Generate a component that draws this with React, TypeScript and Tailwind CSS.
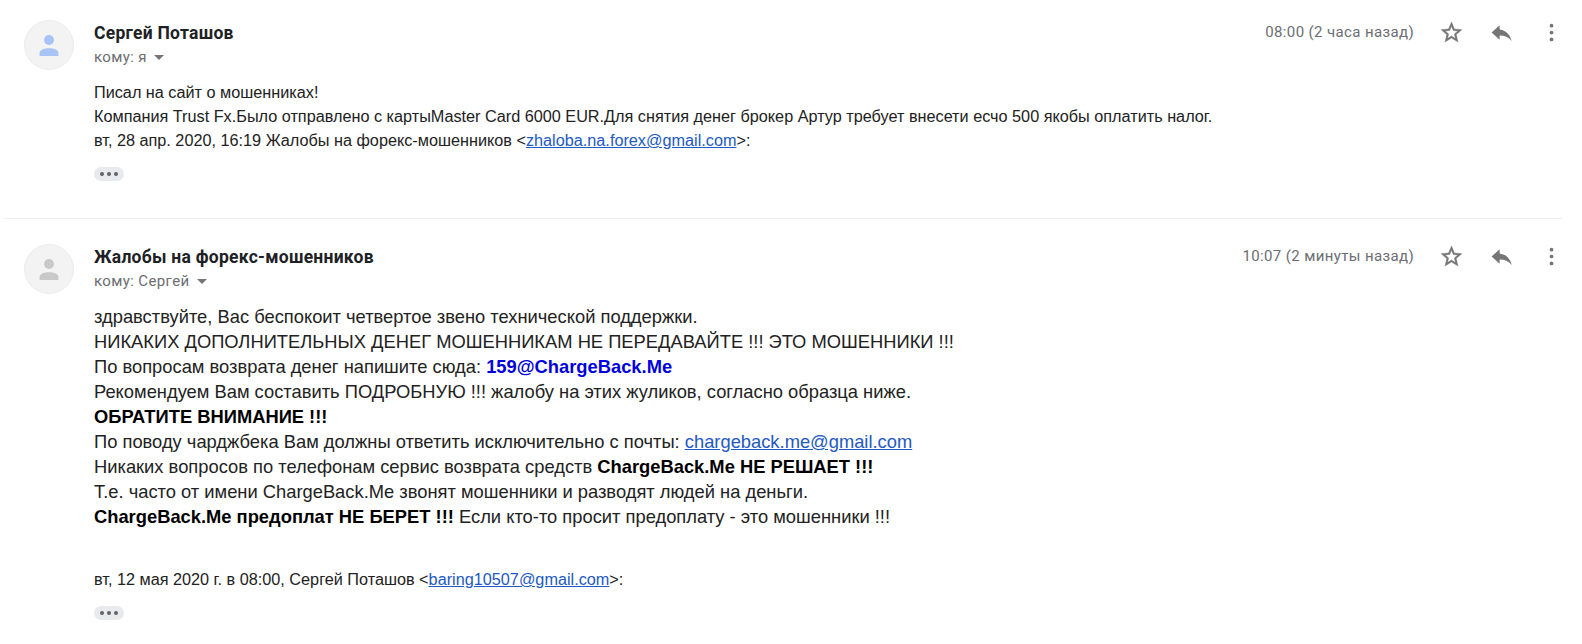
import type { ReactNode } from 'react'

interface MessageProps {
  sender: string
  recipient: string
  time: string
  avatarClass: string
  children: ReactNode
}

const StarIcon = () => (
  <svg viewBox="0 0 24 24" className="size-[25px]" fill="currentColor" stroke="currentColor" strokeWidth="0.4">
    <path d="M22 9.24l-7.19-.62L12 2 9.19 8.63 2 9.24l5.46 4.73L5.82 21 12 17.27 18.18 21l-1.63-7.03L22 9.24zM12 15.4l-3.76 2.27 1-4.28-3.32-2.88 4.38-.38L12 6.1l1.71 4.04 4.38.38-3.32 2.88 1 4.28L12 15.4z" />
  </svg>
)

const ReplyIcon = () => (
  <svg viewBox="0 0 24 24" className="size-[25px]" fill="currentColor">
    <path d="M10.200 9V5L2.500 12l7.700 7v-4.100c5 0 8.600 1.600 11.600 5.300-1.300-5.200-4.600-10.200-11.600-11.200z" />
  </svg>
)

const MoreIcon = () => (
  <svg viewBox="0 0 24 24" className="size-[25px]" fill="currentColor">
    <circle cx="12" cy="5.400" r="1.800" />
    <circle cx="12" cy="12" r="1.800" />
    <circle cx="12" cy="18.600" r="1.800" />
  </svg>
)

const Avatar = ({ className }: { className: string }) => (
  <div className={`flex size-[50px] shrink-0 items-center justify-center rounded-full border border-[#ececec] bg-[#f3f3f3] ${className}`}>
    <svg viewBox="0 0 20 21" className="h-[21px] w-5" fill="currentColor">
      <circle cx="10" cy="5" r="5" />
      <path d="M.6 21v-3.200C.6 14.500 6 13.200 10 13.200s9.400 1.300 9.400 4.600V21z" />
    </svg>
  </div>
)

const Ellipsis = () => (
  <button className="flex h-[14px] w-[30px] items-center justify-center gap-[3px] rounded-full bg-[#e8eaed]">
    <span className="size-1 rounded-full bg-[#5f6368]" />
    <span className="size-1 rounded-full bg-[#5f6368]" />
    <span className="size-1 rounded-full bg-[#5f6368]" />
  </button>
)

const MailLink = ({ children }: { children: string }) => (
  <a href={`mailto:${children}`} className="text-[#2259c4] underline">
    {children}
  </a>
)

const Message = ({ sender, recipient, time, avatarClass, children }: MessageProps) => {
  return (
    <article className="flex pl-6 pt-5">
      <Avatar className={avatarClass} />
      <div className="ml-5 flex-1">
        <header className="flex h-[60px] justify-between">
          <div className="font-[Roboto,sans-serif]">
            <h3 className="h-[25px] text-[17.500px] font-bold leading-[27px] tracking-[0.26px] text-[#202124]">{sender}</h3>
            <div className="flex h-6 items-center gap-[7px] text-[15px] tracking-[0.375px] text-[#6b6e72]">
              <span>кому: {recipient}</span>
              <span className="border-x-5 border-t-5 border-x-transparent border-t-[#757575]" />
            </div>
          </div>
          <div className="flex h-[25px] items-center pr-[18px] text-[#757575]">
            <time className="mr-[25px] font-[Roboto,sans-serif] text-[15px] tracking-[0.375px] text-[#6b6e72]">{time}</time>
            <div className="flex gap-[25px]">
              <StarIcon />
              <ReplyIcon />
              <MoreIcon />
            </div>
          </div>
        </header>
        {children}
      </div>
    </article>
  )
}

const App = () => {
  return (
    <main className="h-[644px] w-full overflow-hidden bg-white font-['Liberation_Sans',sans-serif] text-[#222]">
      <section className="h-[218px]">
        <Message sender="Сергей Поташов" recipient="я" time="08:00 (2 часа назад)" avatarClass="text-[#a9c3f5]">
          <div className="text-[16.240px] leading-6">
            <p>Писал на сайт о мошенниках!</p>
            <p>Компания Trust Fx.Было отправлено с картыMaster Card 6000 EUR.Для снятия денег брокер Артур требует внесети есчо 500 якобы оплатить налог.</p>
            <p>
              вт, 28 апр. 2020, 16:19 Жалобы на форекс-мошенников &lt;<MailLink>zhaloba.na.forex@gmail.com</MailLink>&gt;:
            </p>
          </div>
          <div className="mt-[15px]">
            <Ellipsis />
          </div>
        </Message>
      </section>

      <hr className="ml-1 mr-5 border-[#eee]" />

      <section className="pt-[5px]">
        <Message
          sender="Жалобы на форекс-мошенников"
          recipient="Сергей"
          time="10:07 (2 минуты назад)"
          avatarClass="text-[#c9c9c9]"
        >
          <div className="text-[18.330px] leading-[25px]">
            <p>здравствуйте, Вас беспокоит четвертое звено технической поддержки.</p>
            <p>НИКАКИХ ДОПОЛНИТЕЛЬНЫХ ДЕНЕГ МОШЕННИКАМ НЕ ПЕРЕДАВАЙТЕ !!! ЭТО МОШЕННИКИ !!!</p>
            <p>
              По вопросам возврата денег напишите сюда: <b className="text-[#0000dd]">159@ChargeBack.Me</b>
            </p>
            <p>Рекомендуем Вам составить ПОДРОБНУЮ !!! жалобу на этих жуликов, согласно образца ниже.</p>
            <p className="font-bold text-black">ОБРАТИТЕ ВНИМАНИЕ !!!</p>
            <p>
              По поводу чарджбека Вам должны ответить исключительно с почты: <MailLink>chargeback.me@gmail.com</MailLink>
            </p>
            <p>
              Никаких вопросов по телефонам сервис возврата средств <b className="text-black">ChargeBack.Me НЕ РЕШАЕТ !!!</b>
            </p>
            <p>Т.е. часто от имени ChargeBack.Me звонят мошенники и разводят людей на деньги.</p>
            <p>
              <b className="text-black">ChargeBack.Me предоплат НЕ БЕРЕТ !!!</b> Если кто-то просит предоплату - это мошенники !!!
            </p>
          </div>
          <p className="mt-[38px] text-[16.240px] leading-6">
            вт, 12 мая 2020 г. в 08:00, Сергей Поташов &lt;<MailLink>baring10507@gmail.com</MailLink>&gt;:
          </p>
          <div className="mt-[15px]">
            <Ellipsis />
          </div>
        </Message>
      </section>
    </main>
  )
}

export default App
